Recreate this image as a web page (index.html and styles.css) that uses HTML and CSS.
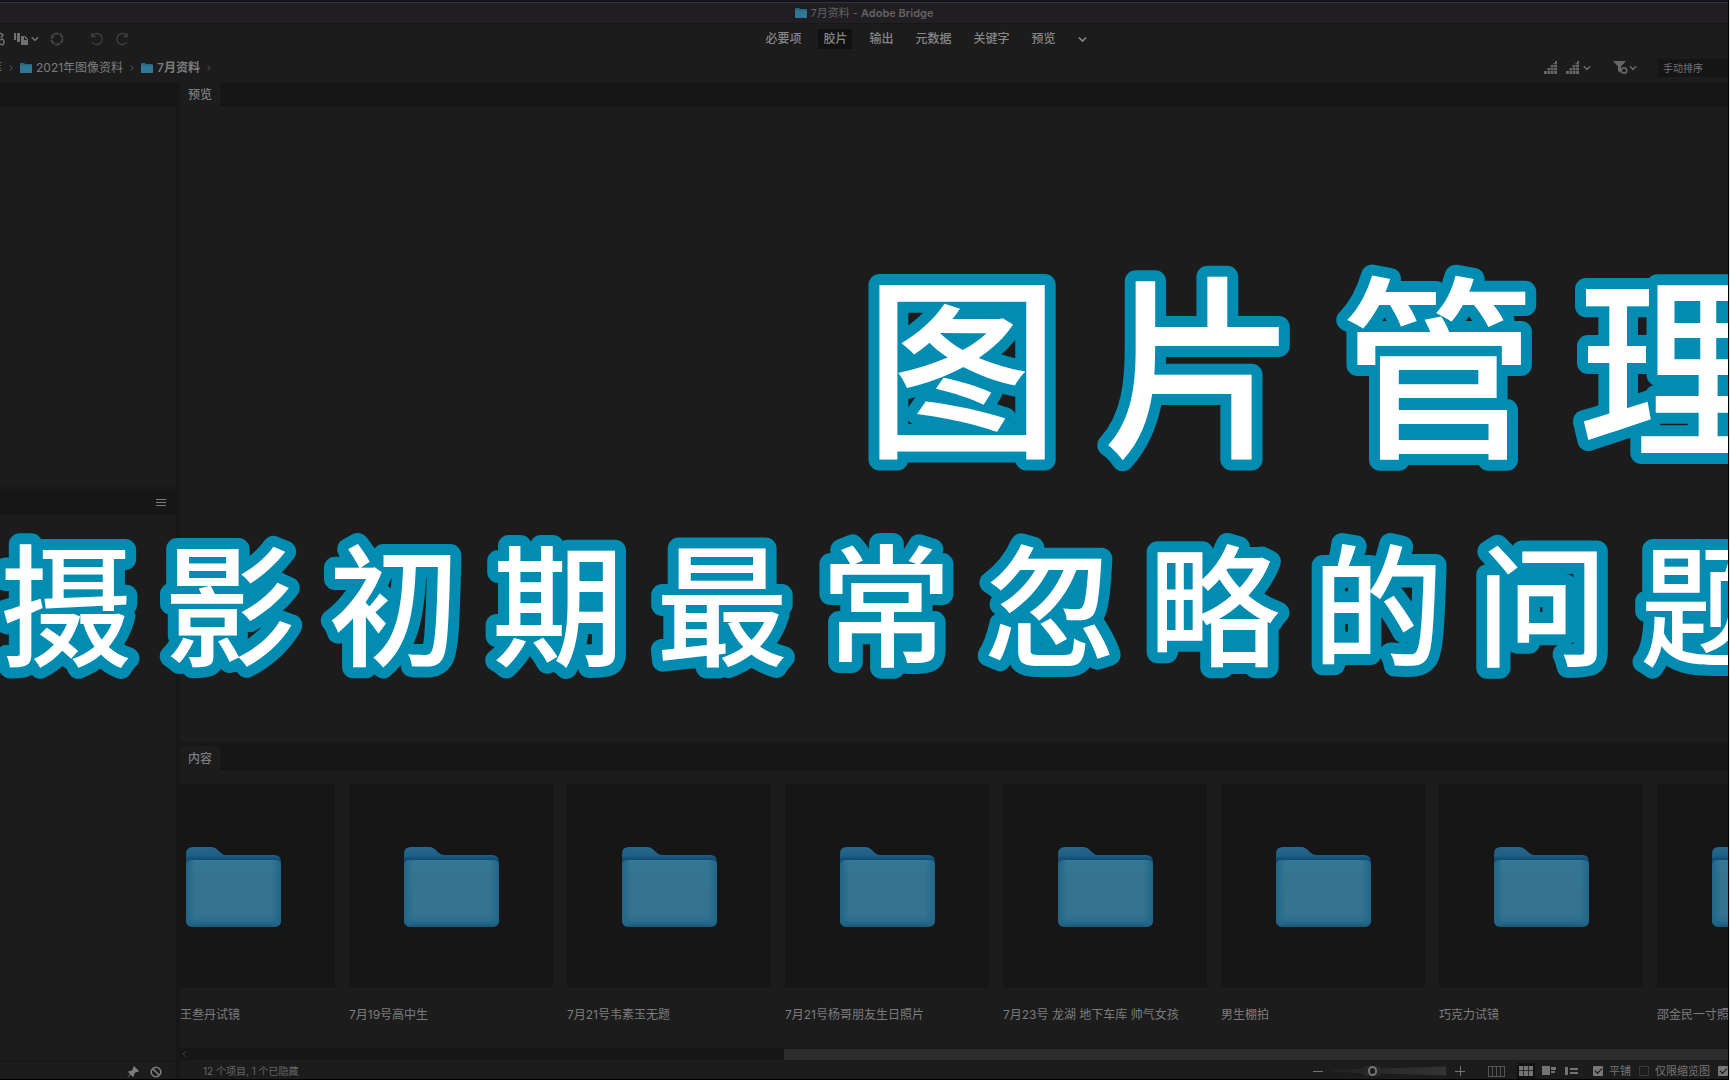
FILE: index.html
```html
<!DOCTYPE html>
<html lang="zh-CN">
<head>
<meta charset="utf-8">
<title>7月资料 - Adobe Bridge</title>
<link rel="stylesheet" href="styles.css">
</head>
<body>
<svg class="defs" aria-hidden="true">
  <defs>
    <linearGradient id="back" x1="0" y1="0" x2="0" y2="1"><stop offset="0" stop-color="#26688b"/><stop offset=".12" stop-color="#1f5f85"/><stop offset=".18" stop-color="#0d4d76"/><stop offset="1" stop-color="#175a7c"/></linearGradient>
    <linearGradient id="front" x1="0" y1="0" x2="0" y2="1"><stop offset="0" stop-color="#357895"/><stop offset=".2" stop-color="#35748f"/><stop offset=".8" stop-color="#35738f"/><stop offset=".9" stop-color="#2d6d8d"/><stop offset="1" stop-color="#185878"/></linearGradient>
    <linearGradient id="side" x1="0" y1="0" x2="1" y2="0"><stop offset="0" stop-color="#1f6688"/><stop offset=".1" stop-color="#1f6688" stop-opacity="0"/><stop offset=".9" stop-color="#1f6688" stop-opacity="0"/><stop offset="1" stop-color="#1f6688"/></linearGradient>
    <symbol id="folder" viewBox="0 0 95 80">
      <path fill="url(#back)" d="M0 7Q0 0 7 0H25C32 0 34 8 40 8H88Q95 8 95 15V70H0Z"/>
      <path fill="url(#front)" d="M0 19Q0 13 6 13H89Q95 13 95 19V73Q95 80 88 80H7Q0 80 0 73Z"/>
      <path fill="url(#side)" d="M0 19Q0 13 6 13H89Q95 13 95 19V73Q95 80 88 80H7Q0 80 0 73Z"/>
    </symbol>
    <symbol id="mini" viewBox="0 0 12 10"><path fill="#23698b" d="M0 1Q0 0 1 0H4L5 1H11Q12 1 12 2V9Q12 10 11 10H1Q0 10 0 9Z"/><path fill="#317895" d="M0 2.500H12V9Q12 10 11 10H1Q0 10 0 9Z"/></symbol>
    <symbol id="down" viewBox="0 0 8 6"><path fill="none" stroke="currentColor" stroke-width="1.500" d="M.8 1.200 4 4.400 7.200 1.200"/></symbol>
    <symbol id="right" viewBox="0 0 5 8"><path fill="none" stroke="currentColor" stroke-width="1" d="M1 .8 4 4 1 7.200"/></symbol>
    <symbol id="stairs" viewBox="0 0 14 13"><path fill="currentColor" d="M0 13V10H3V7H6V4H9V2H11V0H13V13Z"/><path stroke="#1c1c1c" stroke-width=".6" d="M0 3.500H14M0 6.500H14M0 9.500H14M3.300 0V13M6.500 0V13M9.700 0V13"/></symbol>
  </defs>
</svg>
<div class="window">
  <header class="titlebar"><svg class="i-mini" aria-hidden="true"><use href="#mini"/></svg><span>7月资料 - <b>Adobe Bridge</b></span></header>

  <div class="toolbar">
    <div class="tools">
      <button aria-label="获取照片" class="cut"><svg width="5" height="14" viewBox="0 0 5 14"><path fill="none" stroke="currentColor" stroke-width="1.500" d="M0 1 3 3 1 6M0 8Q4 6 4 10T0 12"/></svg></button>
      <button aria-label="优化" class="stack"><svg width="14" height="14" viewBox="0 0 14 14"><path fill="currentColor" d="M0 1h2v7H0zM3 1h3v9H3zM7 4h4l3 3v6H7z"/><path fill="#1c1c1c" d="M10 5h1v2h2v1h-3z"/></svg><svg class="i-down"><use href="#down"/></svg></button>
      <button aria-label="在 Camera Raw 中打开" class="dim shutter"><svg width="14" height="14" viewBox="0 0 14 14"><circle cx="7" cy="7" r="5.500" fill="none" stroke="currentColor" stroke-width="2" stroke-dasharray="4.500 1.200"/><path stroke="currentColor" d="M4 1 3 6M10 1 12 5M13 8 9 12M6 13 2 9"/></svg></button>
      <button aria-label="逆时针旋转" class="dim"><svg width="14" height="14" viewBox="0 0 14 14"><path fill="none" stroke="currentColor" stroke-width="1.300" d="M2 4A5.500 5.500 0 1 1 2 10M2 1V4.500H5.500"/></svg></button>
      <button aria-label="顺时针旋转" class="dim"><svg width="14" height="14" viewBox="0 0 14 14"><path fill="none" stroke="currentColor" stroke-width="1.300" d="M12 4A5.500 5.500 0 1 0 12 10M12 1V4.500H8.500"/></svg></button>
    </div>
    <nav class="spaces">
      <button>必要项</button><button class="on">胶片</button><button>输出</button><button>元数据</button><button>关键字</button><button>预览</button><button aria-label="更多"><svg class="i-down big"><use href="#down"/></svg></button>
    </nav>
  </div>

  <div class="pathbar">
    <nav class="crumbs">
      <a href="#" class="clip">库</a><svg class="i-right"><use href="#right"/></svg>
      <a href="#"><svg class="i-mini"><use href="#mini"/></svg>2021年图像资料</a><svg class="i-right"><use href="#right"/></svg>
      <a href="#" class="here"><svg class="i-mini"><use href="#mini"/></svg>7月资料</a><svg class="i-right"><use href="#right"/></svg>
    </nav>
    <div class="filters">
      <button aria-label="缩略图品质"><svg class="i-stairs"><use href="#stairs"/></svg></button>
      <button aria-label="品质选项"><svg class="i-stairs"><use href="#stairs"/></svg><svg class="i-down"><use href="#down"/></svg></button>
      <button aria-label="评级筛选" class="funnel"><svg width="15" height="15" viewBox="0 0 15 15"><path fill="currentColor" d="M0 1H13L8 6.500V13L5 11V6.500Z"/><circle cx="11" cy="10.500" r="2.700" fill="#1c1c1c" stroke="currentColor" stroke-width="1.700"/></svg><svg class="i-down"><use href="#down"/></svg></button>
      <select aria-label="排序"><option>手动排序</option></select>
    </div>
  </div>

  <main class="panels">
    <aside class="side">
      <div class="tabs"></div>
      <div class="upper"><div class="row"></div></div>
      <div class="tabs end"><button aria-label="面板菜单"><svg width="10" height="8" viewBox="0 0 10 8"><path stroke="currentColor" d="M0 1.500H10M0 4.500H10M0 7.500H10"/></svg></button></div>
      <div class="lower"><div class="row"></div><div class="row short"></div></div>
      <div class="sidefoot">
        <button aria-label="固定"><svg width="12" height="12" viewBox="0 0 12 12"><path fill="currentColor" d="M7 0 12 5 10.500 6 9 6 7 8 7 10 6 11 3.800 8.800 0 12 3 8 1 6 2 5 4 5 6 3 6 1.500Z"/></svg></button>
        <button aria-label="禁用"><svg width="12" height="12" viewBox="0 0 12 12"><path fill="none" stroke="currentColor" stroke-width="1.500" d="M6 1.200A4.800 4.800 0 1 0 6.010 1.200M2.600 2.600 9.400 9.400"/></svg></button>
      </div>
    </aside>

    <div class="work">
      <section class="preview"><div class="tabs"><h2>预览</h2></div></section>
      <section class="content">
        <div class="tabs"><h2>内容</h2></div>
        <div class="strip">
          <figure class="first"><div class="thumb"><svg class="folder"><use href="#folder"/></svg></div><figcaption>王叁丹试镜</figcaption></figure>
          <figure><div class="thumb"><svg class="folder"><use href="#folder"/></svg></div><figcaption>7月19号高中生</figcaption></figure>
          <figure><div class="thumb"><svg class="folder"><use href="#folder"/></svg></div><figcaption>7月21号韦素玉无题</figcaption></figure>
          <figure><div class="thumb"><svg class="folder"><use href="#folder"/></svg></div><figcaption>7月21号杨哥朋友生日照片</figcaption></figure>
          <figure><div class="thumb"><svg class="folder"><use href="#folder"/></svg></div><figcaption>7月23号 龙湖 地下车库 帅气女孩</figcaption></figure>
          <figure><div class="thumb"><svg class="folder"><use href="#folder"/></svg></div><figcaption>男生棚拍</figcaption></figure>
          <figure><div class="thumb"><svg class="folder"><use href="#folder"/></svg></div><figcaption>巧克力试镜</figcaption></figure>
          <figure><div class="thumb"><svg class="folder"><use href="#folder"/></svg></div><figcaption>邵金民一寸照</figcaption></figure>
        </div>
        <div class="scroll"><svg class="i-left" viewBox="0 0 5 8"><path fill="none" stroke="currentColor" d="M4 1 1 4 4 7"/></svg><div class="knob"></div></div>
        <footer class="status">
          <span>12 个项目, 1 个已隐藏</span>
          <div class="view">
            <button aria-label="缩小" class="minus"><svg width="10" height="10" viewBox="0 0 10 10"><path stroke="currentColor" d="M0 5.500H10"/></svg></button>
            <input type="range" aria-label="缩略图大小" min="0" max="100" value="34">
            <button aria-label="放大" class="plus"><svg width="10" height="10" viewBox="0 0 10 10"><path stroke="currentColor" d="M0 5.500H10M5.500 0V10"/></svg></button>
            <button aria-label="锁定网格" class="lock"><svg width="17" height="11" viewBox="0 0 17 11"><path fill="none" stroke="currentColor" d="M.5 0V11M4.500 0V11M8.500 0V11M12.500 0V11M16.500 0V11M0 .5H17M0 10.500H17"/></svg></button>
            <button aria-label="缩略图视图" class="sel"><svg width="14" height="10" viewBox="0 0 14 10"><path fill="currentColor" d="M0 0H14V10H0Z"/><path stroke="#111" d="M4.500 0V10M9.500 0V10M0 4.500H14" stroke-width=".7"/></svg></button>
            <button aria-label="详细信息视图"><svg width="14" height="10" viewBox="0 0 14 10"><path fill="currentColor" d="M0 0H8V9H0ZM9 1H14V4H9ZM9 5H13V7H9Z"/></svg></button>
            <button aria-label="列表视图"><svg width="13" height="10" viewBox="0 0 13 10"><path fill="currentColor" d="M0 1H3V9H0ZM5 2H13V4H5ZM5 6H13V8H5Z"/></svg></button>
            <label class="tile"><input type="checkbox" checked>平铺</label>
            <label><input type="checkbox">仅限缩览图</label>
            <input type="checkbox" checked aria-label="显示">
          </div>
        </footer>
      </section>
    </div>
  </main>
  <svg class="headline" role="img" aria-label="图片管理 摄影初期最常忽略的问题">
    <text class="big-line" x="50%" y="442">图片管理</text>
    <text class="small-line" x="0" y="656">摄影初期最常忽略的问题</text>
  </svg>
</div>
</body>
</html>
```
FILE: styles.css
```css
* { box-sizing: border-box; }
html { height: 100%; background: #000; }
body {
  margin: 0;
  height: 100%;
  overflow: hidden;
  border-right: 1px solid #e6e6e6;
  background: #1c1c1c;
  color: #7c7c7c;
  font: 12px/16px Inter, "Noto Sans CJK SC", sans-serif;
}
button, input, select { font: inherit; color: inherit; margin: 0; }
button { display: flex; align-items: center; gap: 3px; padding: 0; border: 0; background: none; }
svg { display: block; flex: none; }
a { color: inherit; text-decoration: none; }
h2 { margin: 0; font-size: 12px; font-weight: 500; }
.defs { position: absolute; width: 0; height: 0; }

.window {
  position: relative;
  display: flex;
  flex-direction: column;
  height: 100%;
  overflow: hidden;
  border-right: 1px solid #000;
  border-bottom: 1px solid #000;
}
.i-mini { width: 12px; height: 10px; }
.i-down { width: 8px; height: 6px; }
.i-down.big { width: 9px; height: 7px; }
.i-right { width: 4px; height: 8px; color: #666; }
.i-stairs { width: 14px; height: 13px; }

.titlebar {
  display: flex;
  align-items: center;
  justify-content: center;
  gap: 4px;
  height: 24px;
  border-top: 2px solid #12121c;
  border-bottom: 1px solid #171717;
  background: #211e22;
  box-shadow: inset 0 1px #343338;
  color: #626164;
  font-size: 11px;
}
.titlebar b { font-weight: 600; }

.toolbar {
  display: grid;
  grid-template-columns: 1fr auto 1fr;
  align-items: center;
  height: 29px;
  padding-top: 2px;
  border-bottom: 1px solid #191919;
}
.tools { display: flex; align-items: center; gap: 11px; color: #707070; }
.tools .dim { color: #424242; }
.tools .shutter { margin-right: 15px; }
.tools .cut { margin-right: -2px; }
.spaces { display: flex; align-items: center; gap: 12px; margin-left: 124px; font-weight: 500; color: #868686; }
.spaces button { height: 20px; padding: 0 5px; }
.spaces .on { background: #111; }

.pathbar {
  display: flex;
  align-items: center;
  justify-content: space-between;
  height: 29px;
}
.crumbs { display: flex; align-items: center; gap: 7px; }
.crumbs a { display: flex; align-items: center; gap: 4px; }
.crumbs .clip { width: 2px; direction: rtl; overflow: hidden; }
.crumbs .here { font-weight: 600; }
.filters { display: flex; align-items: center; gap: 8px; color: #666; }
.filters .funnel { margin: 0 13px 0 14px; gap: 1px; }
.filters select {
  appearance: none;
  width: 70px;
  height: 18px;
  padding: 0 5px;
  border: 0;
  background: #151515;
  color: #747474;
  font-size: 10px;
}

.panels { display: flex; flex: 1; min-height: 0; }
.tabs { display: flex; flex: none; height: 24px; border-bottom: 1px solid #131313; background: #161616; }
.tabs h2 { height: 24px; padding: 5px 8px; background: #1c1c1c; }

.side { display: flex; flex-direction: column; width: 180px; border-right: 4px solid #171717; }
.side .tabs.end { align-items: center; justify-content: flex-end; padding-right: 10px; }
.upper { flex: 379; border-bottom: 5px solid #181818; }
.lower { flex: 547; }
.row { height: 24px; border-bottom: 1px solid #191919; }
.lower .row { height: 43px; }
.lower .row.short { height: 21px; }
.sidefoot { display: flex; align-items: center; justify-content: flex-end; gap: 11px; height: 18px; padding: 2px 14px 0 0; border-top: 1px solid #171717; }

.work { display: flex; flex: 1; flex-direction: column; min-width: 0; overflow: hidden; }
.preview { flex: 1; }
.content { border-top: 4px solid #171717; }
.strip { display: flex; gap: 14px; margin-left: -49px; padding: 14px 0 25px; }
.strip figure { flex: none; width: 204px; margin: 0; }
.strip figcaption { margin-top: 19px; line-height: 16px; white-space: nowrap; }
.strip .first figcaption { padding-left: 49px; }
.thumb { display: grid; place-items: center; height: 204px; padding-top: 2px; background: #161616; }
.folder { width: 95px; height: 80px; }

.scroll { display: flex; align-items: center; justify-content: space-between; height: 12px; background: #171717; }
.i-left { width: 5px; height: 8px; margin-left: 2px; color: #3c3c3c; }
.knob { width: 61%; height: 11px; background: #2c2c2c; }

.status { display: flex; align-items: center; justify-content: space-between; height: 19px; padding: 3px 0 0 23px; font-size: 10px; color: #666; }
.view { display: flex; align-items: center; gap: 9px; font-size: 11px; color: #747474; }
.view label { display: flex; align-items: center; gap: 6px; white-space: nowrap; }
.view .tile { margin-left: 6px; margin-right: -1px; }
.view .lock { margin: 0 5px 0 14px; color: #555; }
.view .sel { padding: 3px 2px; margin: 0 -2px; background: #111; }
.view input[type="checkbox"] {
  appearance: none;
  display: grid;
  place-items: center;
  flex: none;
  width: 10px;
  height: 10px;
  border: 1px solid #3a3a3a;
}
.view input[type="checkbox"]:checked { border: 0; border-radius: 1px; background: #777; }
.view input[type="checkbox"]:checked::after {
  content: "";
  width: 6px;
  height: 3px;
  margin-top: -2px;
  border: solid #111;
  border-width: 0 0 1px 1px;
  rotate: -45deg;
}
.view > input[type="checkbox"] { margin-left: -1px; }
.view input[type="range"] {
  appearance: none;
  width: 114px;
  height: 10px;
  background: linear-gradient(90deg, #222, #333);
  clip-path: polygon(0 45%, 28% 25%, 28% 0, 42% 0, 42% 25%, 100% 5%, 100% 95%, 42% 75%, 42% 100%, 28% 100%, 28% 75%, 0 55%);
}
.view input[type="range"]::-webkit-slider-thumb {
  appearance: none;
  width: 9px;
  height: 10px;
  border: 2px solid #757575;
  border-radius: 5px;
  background: #1c1c1c;
}

.headline {
  position: absolute;
  inset: 0;
  width: 100%;
  height: 100%;
  pointer-events: none;
  fill: #fff;
  stroke: #028cb2;
  stroke-width: 22px;
  stroke-linejoin: round;
  paint-order: stroke;
  font-family: "Noto Sans CJK SC", sans-serif;
  font-weight: 500;
}
.big-line { font-size: 196px; letter-spacing: 42px; }
.small-line { font-size: 132px; letter-spacing: 32px; }
```
